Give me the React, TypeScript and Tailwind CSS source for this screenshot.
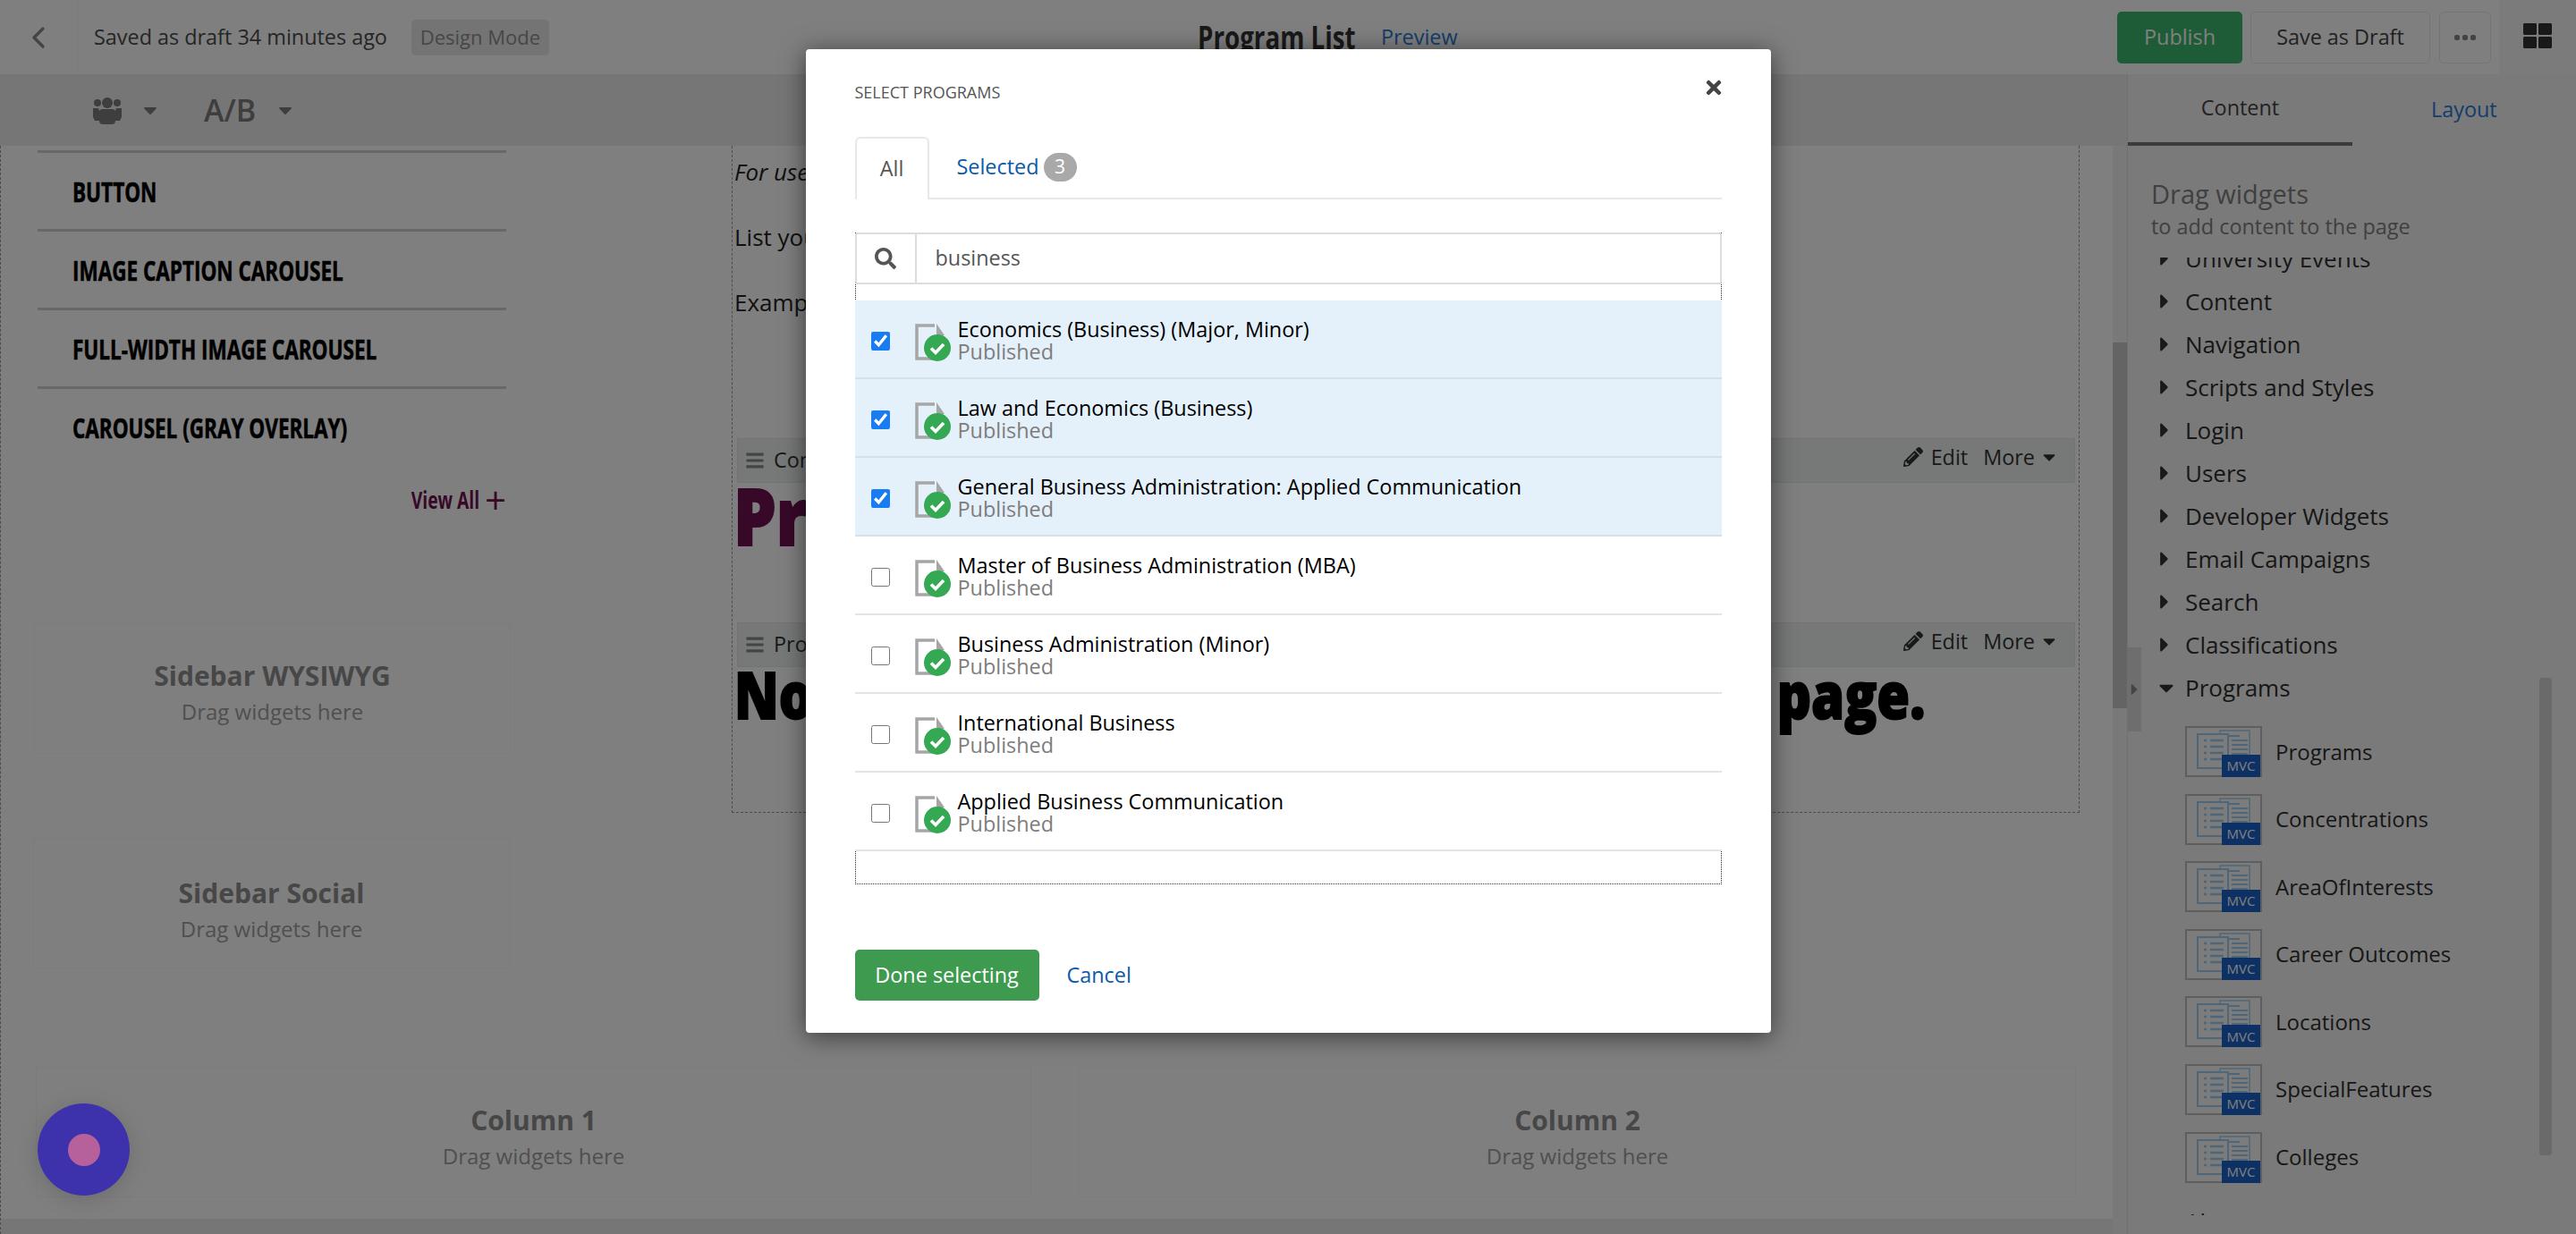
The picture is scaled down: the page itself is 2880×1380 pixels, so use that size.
import { useState } from "react";
import { ChevronLeft } from "lucide-react";
import { FaBars, FaCaretDown, FaCaretRight, FaPencilAlt, FaSearch, FaThLarge, FaTimes } from "react-icons/fa";

const programs = [
  { name: "Economics (Business) (Major, Minor)", selected: true },
  { name: "Law and Economics (Business)", selected: true },
  { name: "General Business Administration: Applied Communication", selected: true },
  { name: "Master of Business Administration (MBA)", selected: false },
  { name: "Business Administration (Minor)", selected: false },
  { name: "International Business", selected: false },
  { name: "Applied Business Communication", selected: false },
];

const closedGroups = ["Content", "Navigation", "Scripts and Styles", "Login", "Users", "Developer Widgets", "Email Campaigns", "Search", "Classifications"];
const mvcWidgets = ["Programs", "Concentrations", "AreaOfInterests", "Career Outcomes", "Locations", "SpecialFeatures", "Colleges"];
const sidebarLinks = ["BUTTON", "IMAGE CAPTION CAROUSEL", "FULL-WIDTH IMAGE CAROUSEL", "CAROUSEL (GRAY OVERLAY)"];

function PublishedDoc() {
  return (
    <svg width="40" height="42" viewBox="0 0 40 42" className="shrink-0">
      <path d="M22 2H2v37h20" fill="none" stroke="#a6a6a6" strokeWidth="3.5" />
      <path d="M24 0l9 13h-9z" fill="#a6a6a6" />
      <path d="M29.5 13v6" stroke="#a6a6a6" strokeWidth="3.5" />
      <circle cx="25" cy="27" r="15" fill="#35a853" />
      <path d="M18 27.5l5 5 9-9.5" fill="none" stroke="#fff" strokeWidth="3.6" />
    </svg>
  );
}

function MvcThumb() {
  return (
    <div className="relative h-[57px] w-[86px] shrink-0 border-2 border-[#bcbcbc] bg-[#f8f8f8]">
      <svg width="82" height="53" viewBox="0 0 82 53" className="text-[#9ccdee]">
        <path d="M37 3h33v36H37z" fill="none" stroke="currentColor" strokeWidth="1.5" />
        <path d="M47 9h12M50 14h18M50 19h18M50 24h18M50 29h18" stroke="currentColor" strokeWidth="2" />
        <path d="M12 7h34v38H12z" fill="#f8f8f8" stroke="currentColor" strokeWidth="2" />
        <path d="M19 14h3M26 14h15M19 21h3M26 21h15M19 28h3M26 28h15M19 35h3M26 35h15" stroke="currentColor" strokeWidth="2.5" />
      </svg>
      <div className="absolute -bottom-[2px] right-0 flex h-[25px] w-[43px] items-center justify-center bg-[#1a62c8] text-[15px] text-white">MVC</div>
    </div>
  );
}

function DropBox({ title, className, pad }: { title: string; className: string; pad: string }) {
  return (
    <div className={`flex h-[146px] flex-col items-center border border-dotted border-[#f0f0f0] ${pad} ${className}`}>
      <div className="text-[30px] font-bold leading-[40px] text-[#8e8e8e]">{title}</div>
      <div className="text-[24px] leading-[40px] text-[#a0a0a0]">Drag widgets here</div>
    </div>
  );
}

function WidgetHeader({ label, className }: { label: string; className: string }) {
  return (
    <div className={`flex h-[50px] items-center border border-[#e4e8e6] bg-[#eef2f0] pl-[8px] pr-[17px] text-[23.4px] text-[#333333] ${className}`}>
      <FaBars className="text-[22px] text-[#888888]" />
      <span className="ml-[10px]">{label}</span>
      <div className="ml-auto flex items-center pb-[7px]">
        <FaPencilAlt className="text-[22px]" />
        <span className="ml-[9px]">Edit</span>
        <span className="ml-[17px]">More</span>
        <FaCaretDown className="ml-[5px] text-[22px]" />
      </div>
    </div>
  );
}

function GroupRow({ label }: { label: string }) {
  return (
    <div className="flex h-[48px] items-center text-[26px] text-[#2e2e2e]">
      <FaCaretRight className="ml-[6px] w-[16px] text-[26px] text-[#333333]" />
      <span className="ml-[15px]">{label}</span>
    </div>
  );
}

function ProgramRow({ name, selected }: { name: string; selected: boolean }) {
  const [checked, setChecked] = useState(selected);
  return (
    <label className={`flex h-[88px] items-center border-b-2 ${selected ? "border-[#d7e0e8] bg-[#e4f0fa]" : "border-[#e4e4e4] bg-white"}`}>
      <input
        type="checkbox"
        checked={checked}
        onChange={(e) => setChecked(e.target.checked)}
        className="ml-[18px] mt-[5px] h-[21px] w-[21px] accent-[#1a7cf2]"
      />
      <span className="ml-[28px] mt-[8px] flex">
        <PublishedDoc />
      </span>
      <span className="ml-[8px] mt-[4px] flex flex-col">
        <span className="text-[23.4px] leading-[25px] text-black">{name}</span>
        <span className="text-[23.4px] leading-[25px] text-[#7d7d7d]">Published</span>
      </span>
    </label>
  );
}

function SelectProgramsModal() {
  return (
    <div className="relative h-[1100px] w-[1079px] rounded-[4px] bg-white px-[55px] pt-[36px] shadow-[0_4px_28px_rgba(0,0,0,0.55)]">
      <div className="text-[18px] leading-[24px] text-[#555555]">SELECT PROGRAMS</div>
      <FaTimes className="absolute right-[52px] top-[31px] text-[24px] text-[#444444]" />

      <div className="mt-[38px] flex h-[70px] border-b-2 border-[#e8e8e8]">
        <div className="-mb-[2px] flex h-[70px] w-[83px] items-center justify-center rounded-t-[6px] border-2 border-b-0 border-[#e8e8e8] bg-white text-[23.4px] text-[#555555]">All</div>
        <div className="ml-[31px] flex items-center text-[23.4px] text-[#0a5aa8]">
          Selected
          <span className="ml-[5px] flex h-[32px] w-[37px] items-center justify-center rounded-full bg-[#a9a9a9] text-[21px] text-white">3</span>
        </div>
      </div>

      <div className="mt-[37px] h-[729px] border border-dotted border-[#333333]">
        <div className="-mx-px -mt-px flex h-[58px] rounded-[3px] border-2 border-[#dddddd] bg-white">
          <div className="flex w-[67px] items-center justify-center border-r-2 border-[#dddddd]">
            <FaSearch className="text-[24px] text-[#555555]" />
          </div>
          <input readOnly defaultValue="business" className="flex-1 pl-[21px] text-[23.4px] text-[#555555] outline-none" />
        </div>
        <div className="-mx-px mt-[18px] bg-white">
          {programs.map((p) => (
            <ProgramRow key={p.name} name={p.name} selected={p.selected} />
          ))}
        </div>
      </div>

      <div className="mt-[73px] flex items-center">
        <button className="h-[57px] w-[206px] rounded-[5px] bg-[#3d9a4f] text-[23.4px] text-white">Done selecting</button>
        <a className="ml-[31px] text-[23.4px] text-[#0a5aa8]">Cancel</a>
      </div>
    </div>
  );
}

export default function App() {
  return (
    <div className="relative h-[1380px] w-[2880px] overflow-hidden bg-white font-['Open_Sans',sans-serif]">
      {/* Top bar */}
      <div className="flex h-[83px]">
        <div className="flex flex-1 items-center bg-white pr-[9px]">
          <div className="flex h-full w-[87px] items-center justify-center border-r border-[#f4f4f4]">
            <ChevronLeft className="h-[40px] w-[40px] text-[#888888]" strokeWidth={2} />
          </div>
          <span className="ml-[18px] text-[23.4px] text-[#4c4c4c]">Saved as draft 34 minutes ago</span>
          <span className="ml-[27px] flex h-[40px] w-[154px] items-center justify-center rounded-[5px] bg-[#e8e8e8] text-[22px] text-[#8e8e8e]">Design Mode</span>
          <div className="ml-[725px] w-[177px]">
            <div className="origin-left scale-x-[0.77] whitespace-nowrap text-[36px] font-bold text-[#333333]">Program List</div>
          </div>
          <a className="ml-[28px] text-[23.4px] text-[#2a7ad8]">Preview</a>
          <button className="ml-auto h-[58px] w-[140px] rounded-[5px] bg-[#3cb86e] text-[23.4px] text-white">Publish</button>
          <button className="ml-[9px] h-[58px] w-[201px] rounded-[5px] border border-[#e8e8e8] text-[23.4px] text-[#444444]">Save as Draft</button>
          <button className="ml-[10px] flex h-[58px] w-[58px] items-center justify-center gap-[3px] rounded-[5px] border border-[#e8e8e8]">
            <span className="h-[6px] w-[6px] rounded-[2px] bg-[#888888]" />
            <span className="h-[6px] w-[6px] rounded-[2px] bg-[#888888]" />
            <span className="h-[6px] w-[6px] rounded-[2px] bg-[#888888]" />
          </button>
        </div>
        <div className="flex w-[86px] items-start justify-center bg-[#f6f6f6] pt-[24px]">
          <FaThLarge className="text-[32px] text-[#333333]" />
        </div>
      </div>

      <div className="flex h-[1297px]">
        <div className="flex w-[2378px] flex-col">
          {/* Toolbar */}
          <div className="flex h-[80px] items-center bg-[#ececec] text-[#7c7c7c]">
            <svg width="32" height="32" viewBox="0 0 32 32" className="ml-[104px]" fill="currentColor">
              <circle cx="16" cy="8" r="6" />
              <circle cx="5" cy="8" r="4" />
              <circle cx="27" cy="8" r="4" />
              <path d="M0 14h6l2 6v8H2l-2-4zM32 14h-6l-2 6v8h6l2-4z" />
              <path d="M7 18q0-3 4-3h10q4 0 4 3v10q0 4-4 4H11q-4 0-4-4z" />
            </svg>
            <FaCaretDown className="ml-[20px] text-[24px]" />
            <span className="ml-[48px] text-[34px] font-semibold">A/B</span>
            <FaCaretDown className="ml-[21px] text-[24px]" />
          </div>

          <div className="flex flex-1">
            {/* Page canvas */}
            <div className="flex w-[2362px] flex-col border-l border-dashed border-[#999999]">
              <div className="flex h-[1030px]">
                <div className="w-[817px]">
                  <div className="ml-[41px] mt-[5px] w-[524px]">
                    {sidebarLinks.map((link) => (
                      <div key={link} className="flex h-[88px] items-center border-t-[3px] border-[#d0d0d0] pl-[39px] pt-[2px]">
                        <span className="origin-left scale-x-[0.75] whitespace-nowrap text-[30px] font-bold text-black [-webkit-text-stroke:0.6px]">{link}</span>
                      </div>
                    ))}
                    <div className="mt-[19px] flex h-[40px] items-center justify-end font-bold text-[#701050]">
                      <span className="origin-right scale-x-[0.74] whitespace-nowrap text-[26px]">View All</span>
                      <span className="ml-[6px] text-[42px] font-normal leading-none">+</span>
                    </div>
                  </div>
                  <DropBox title="Sidebar WYSIWYG" className="ml-[37px] mt-[118px] w-[533px]" pad="pt-[38px]" />
                  <DropBox title="Sidebar Social" className="ml-[36px] mt-[94px] w-[533px]" pad="pt-[41px]" />
                </div>

                <div className="h-[746px] w-[1507px] border-x border-b border-dashed border-[#999999] pl-[5px] pr-[4px]">
                  <div className="-ml-[3px] pt-[11px] text-[26px] leading-[36px] text-[#222222]">
                    <p className="italic">For use</p>
                    <p className="mt-[37px]">List your</p>
                    <p className="mt-[37px]">Example</p>
                  </div>
                  <WidgetHeader label="Content" className="mt-[134px]" />
                  <div className="mt-[2px] h-[90px]">
                    <div className="-ml-[4px] origin-left scale-x-[0.86] whitespace-nowrap text-[88px] font-extrabold leading-[68px] text-[#701050] [-webkit-text-stroke:2px]">Program List</div>
                  </div>
                  <WidgetHeader label="Programs" className="mt-[64px]" />
                  <div className="h-[80px]">
                    <div className="-ml-[3px] origin-left scale-x-[0.817] whitespace-nowrap text-[73px] font-extrabold leading-[60px] text-black [-webkit-text-stroke:2px]">No programs are associated with this page.</div>
                  </div>
                </div>
              </div>

              <div className="ml-[39px] flex gap-[53px]">
                <DropBox title="Column 1" className="w-[1113px]" pad="pt-[39px]" />
                <DropBox title="Column 2" className="w-[1115px]" pad="pt-[39px]" />
              </div>
              <div className="mt-auto h-[17px] bg-[#ececec]" />
            </div>

            {/* Canvas scrollbar */}
            <div className="w-[16px] bg-[#f2f2f2] pt-[220px]">
              <div className="h-[409px] bg-[#c8c8c8]" />
            </div>
          </div>
        </div>

        {/* Widgets panel */}
        <div className="relative flex w-[502px] flex-col border-l border-[#e0e0e0] bg-[#f5f5f5]">
          <div className="flex h-[80px] items-center">
            <div className="flex h-full w-[251px] items-center justify-center border-b-[4px] border-[#777777] text-[23.4px] text-[#444444]">Content</div>
            <a className="ml-[88px] text-[23.4px] text-[#2a7ad8]">Layout</a>
          </div>
          <div className="pl-[26px] pt-[34px] text-[#808080]">
            <div className="text-[29px] leading-[40px]">Drag widgets</div>
            <div className="text-[23.4px] leading-[32px]">to add content to the page</div>
          </div>
          <div className="relative ml-[27px] mt-[19px] h-[1071px] w-[448px] overflow-hidden">
            <div className="-mt-[23px]">
              <GroupRow label="University Events" />
              {closedGroups.map((g) => (
                <GroupRow key={g} label={g} />
              ))}
              <div className="flex h-[48px] items-center text-[26px] text-[#2e2e2e]">
                <FaCaretDown className="ml-[6px] w-[20px] text-[26px] text-[#333333]" />
                <span className="ml-[11px]">Programs</span>
              </div>
              <div className="flex flex-col gap-[18.6px] pb-[20px] pl-[37px] pt-[19px]">
                {mvcWidgets.map((w) => (
                  <div key={w} className="flex items-center text-[24px] text-[#2e2e2e]">
                    <MvcThumb />
                    <span className="ml-[15px]">{w}</span>
                  </div>
                ))}
              </div>
              <GroupRow label="Alerts" />
            </div>
            <div className="absolute right-[1px] top-[470px] h-[534px] w-[14px] rounded-[3px] bg-[#d4d4d4]" />
          </div>
          <div className="absolute left-0 top-[641px] flex h-[94px] w-[15px] items-center bg-[#dcdcdc]">
            <FaCaretRight className="text-[20px] text-[#888888]" />
          </div>
        </div>
      </div>

      {/* Modal */}
      <div className="absolute inset-0 flex items-start justify-center bg-[#00000080] pt-[55px]">
        <SelectProgramsModal />
      </div>

      {/* Chat launcher, sits above the overlay */}
      <div className="absolute left-[42px] top-[1234px] flex h-[103px] w-[103px] items-center justify-center rounded-full bg-[#3e32ac] shadow-[0_4px_24px_rgba(0,0,0,0.15)]">
        <div className="h-[36px] w-[36px] rounded-full bg-[#b6609c]" />
      </div>
    </div>
  );
}
